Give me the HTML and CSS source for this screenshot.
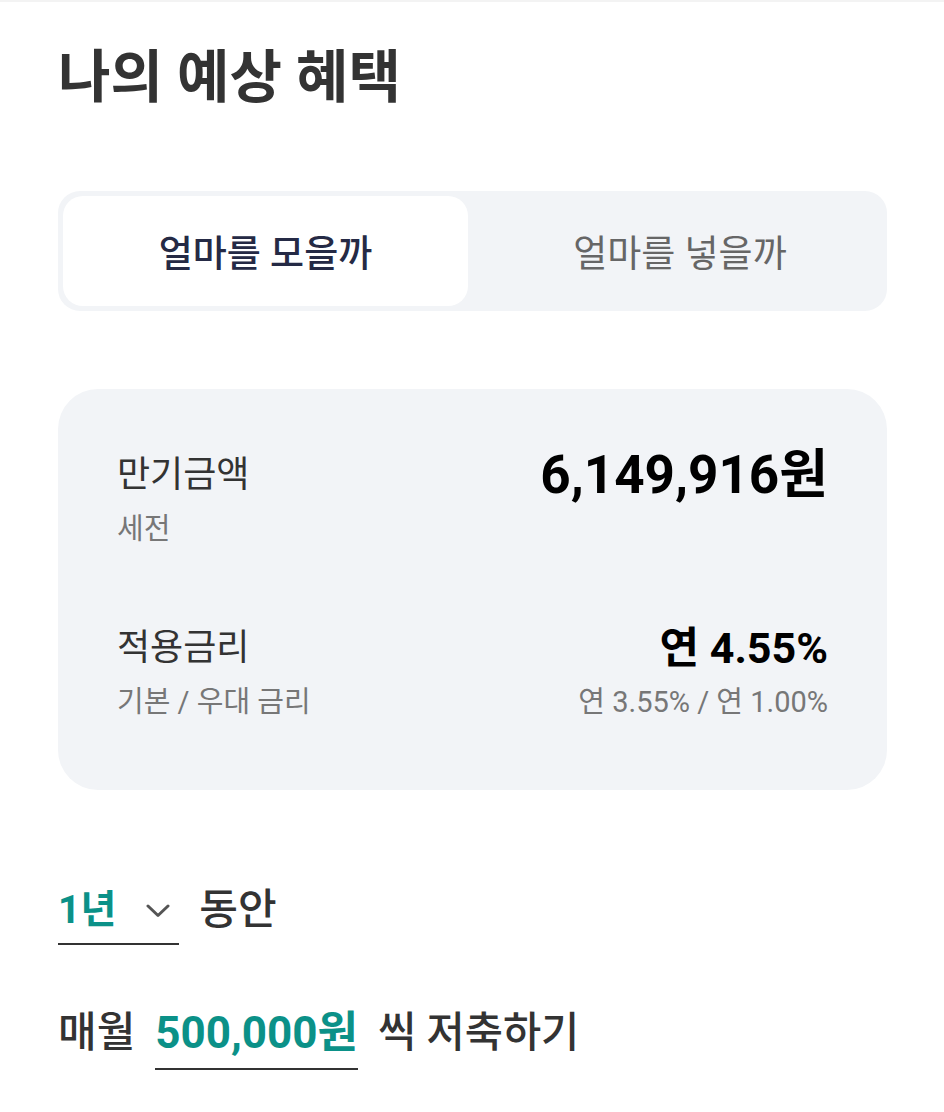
FILE: index.html
```html
<!DOCTYPE html>
<html lang="ko">
<head>
<meta charset="utf-8">
<title>나의 예상 혜택</title>
<link rel="stylesheet" href="styles.css">
</head>
<body>
<div class="page">
  <h1 class="title">나의 예상 혜택</h1>

  <div class="tabs">
    <div class="tab active">얼마를 모을까</div>
    <div class="tab tab-second">얼마를 넣을까</div>
  </div>

  <div class="card">
    <div class="row">
      <div class="col">
        <div class="label">만기금액</div>
        <div class="sub">세전</div>
      </div>
      <div class="col col-right">
        <div class="value value-big">6,149,916원</div>
      </div>
    </div>
    <div class="row">
      <div class="col">
        <div class="label">적용금리</div>
        <div class="sub">기본 / 우대 금리</div>
      </div>
      <div class="col col-right">
        <div class="value value-rate">연 4.55%</div>
        <div class="sub">연 3.55% / 연 1.00%</div>
      </div>
    </div>
  </div>

  <div class="sentence sentence-period">
    <div class="select">
      <span class="accent accent-period">1년</span>
      <svg class="chevron" width="24" height="14" viewBox="0 0 24 14" aria-hidden="true">
        <path d="M2 2 L12 11.5 L22 2" fill="none" stroke="#555555" stroke-width="3" stroke-linecap="round" stroke-linejoin="round"/>
      </svg>
    </div>
    <span class="word">동안</span>
  </div>

  <div class="sentence sentence-amount">
    <span class="word">매월</span>
    <span class="amount accent">500,000원</span>
    <span class="word word-tail">씩 저축하기</span>
  </div>
</div>
</body>
</html>
```

FILE: styles.css
```css
html, body {
  margin: 0;
  padding: 0;
  background: #ffffff;
}

body {
  font-family: Roboto, "Noto Sans CJK KR", "Noto Sans", sans-serif;
  color: #333333;
  border-top: 2px solid #f3f3f3;
}

.page {
  width: 944px;
  box-sizing: border-box;
  padding: 40px 57px 0 58px;
}

.title {
  margin: 0;
  font-size: 57px;
  line-height: 72px;
  font-weight: 700;
  color: #333333;
  letter-spacing: 0;
}

.tabs {
  margin-top: 77px;
  height: 120px;
  box-sizing: border-box;
  padding: 5px;
  background: #f2f4f7;
  border-radius: 22px;
  display: grid;
  grid-template-columns: 405px 1fr;
}

.tab {
  display: flex;
  align-items: center;
  justify-content: center;
  font-size: 37px;
  color: #666666;
  border-radius: 20px;
}

.tab-second {
  padding-left: 10px;
}

.tab.active {
  background: #ffffff;
  color: #252a45;
  font-weight: 500;
}

.card {
  margin-top: 78px;
  background: #f2f4f7;
  border-radius: 40px;
  padding: 62px 59px 68px 59px;
  display: flex;
  flex-direction: column;
  gap: 75px;
}

.row {
  display: flex;
  justify-content: space-between;
  align-items: flex-start;
}

.col {
  display: flex;
  flex-direction: column;
}

.col-right {
  align-items: flex-end;
}

.label {
  font-size: 36px;
  line-height: 48px;
  color: #333333;
}

.sub {
  margin-top: 10px;
  font-size: 29px;
  line-height: 40px;
  color: #777777;
}

.value {
  line-height: 48px;
  font-weight: 700;
  color: #000000;
}

.value-big {
  font-size: 53px;
}

.value-rate {
  font-size: 43px;
}

.sentence {
  display: flex;
  align-items: flex-start;
  font-size: 42px;
  line-height: 56px;
  color: #333333;
}

.sentence-period {
  margin-top: 92px;
  gap: 20px;
}

.sentence-amount {
  margin-top: 60px;
  gap: 20px;
}

.select {
  display: flex;
  align-items: center;
  padding-bottom: 5px;
  padding-right: 9px;
  border-bottom: 2px solid #333333;
}

.accent {
  color: #0b9188;
  font-weight: 700;
  font-size: 44px;
}

.accent-period {
  font-size: 39px;
}

.chevron {
  margin-left: 30px;
  margin-top: 2px;
}

.amount {
  padding-bottom: 7px;
  border-bottom: 2px solid #333333;
}

.word {
  font-weight: 500;
}

.word-tail {
  font-size: 41.5px;
}
```
